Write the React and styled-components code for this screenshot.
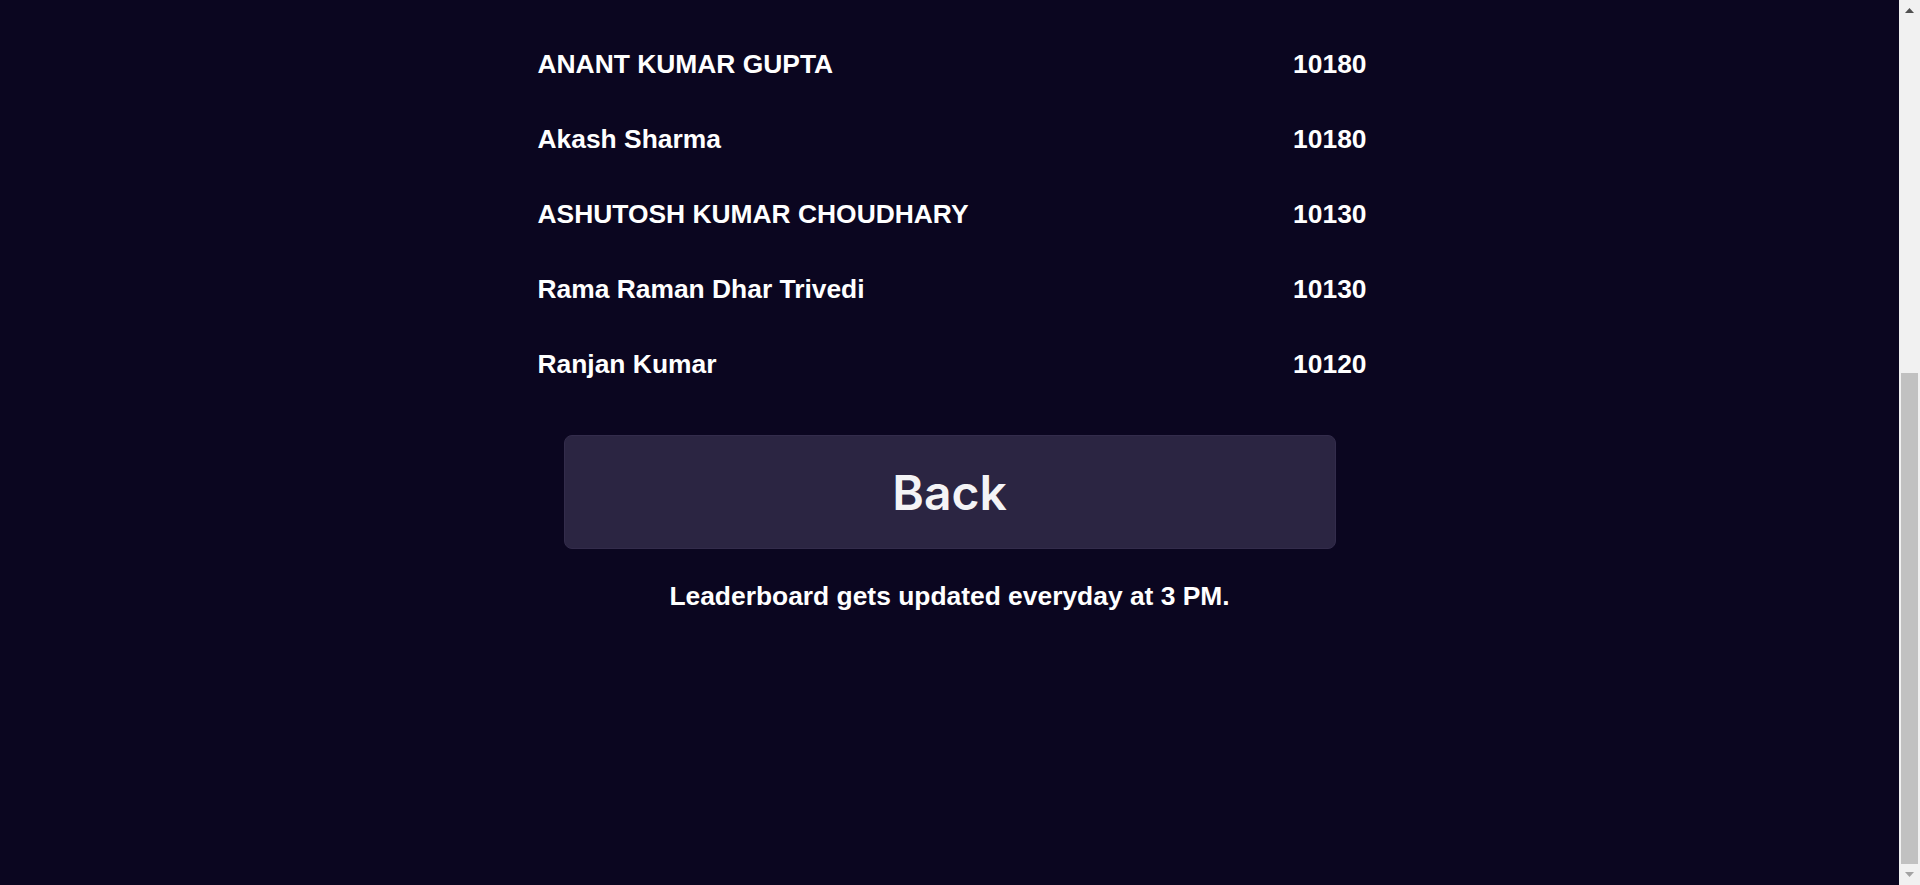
import { useLayoutEffect } from 'react'
import styled, { createGlobalStyle } from 'styled-components'

const players = [
    { name: 'ANANT KUMAR GUPTA', score: 10180 },
    { name: 'Akash Sharma', score: 10180 },
    { name: 'ASHUTOSH KUMAR CHOUDHARY', score: 10130 },
    { name: 'Rama Raman Dhar Trivedi', score: 10130 },
    { name: 'Ranjan Kumar', score: 10120 },
]

export default function App() {
    // the page is shown scrolled to its end
    useLayoutEffect(() => {
        window.scrollTo(0, document.documentElement.scrollHeight)
    }, [])

    return (
        <>
            <GlobalStyle />
            <Page>
                <Header>
                    <h1>Leaderboard</h1>
                </Header>
                <List>
                    {players.map((p, i) => (
                        <Row key={i}>
                            <Name>{p.name}</Name>
                            <Score>{p.score}</Score>
                        </Row>
                    ))}
                </List>
                <BackButton>Back</BackButton>
                <Note>Leaderboard gets updated everyday at 3 PM.</Note>
            </Page>
            <Scrollbar>
                <ArrowBtn>
                    <svg width="9" height="5" viewBox="0 0 9 5">
                        <polygon points="4.5,0 9,5 0,5" fill="#505050" />
                    </svg>
                </ArrowBtn>
                <Track>
                    <Thumb />
                </Track>
                <ArrowBtn>
                    <svg width="9" height="5" viewBox="0 0 9 5">
                        <polygon points="0,0 9,0 4.5,5" fill="#a3a3a3" />
                    </svg>
                </ArrowBtn>
            </Scrollbar>
        </>
    )
}

const GlobalStyle = createGlobalStyle`
    html, body {
        margin: 0;
        padding: 0;
        background: #0b0620;
    }
    body {
        font-family: "Liberation Sans", Arial, sans-serif;
        color: #ffffff;
    }
`

const Page = styled.div`
    width: calc(100% - 21px);
    display: flex;
    flex-direction: column;
    align-items: center;
    padding-bottom: 273px;
`

const Header = styled.div`
    height: 676px;
    display: flex;
    align-items: center;
    justify-content: center;
    h1 {
        margin: 0;
        font-size: 40px;
        font-weight: 700;
    }
`

const List = styled.div`
    width: 829px;
    margin-left: 5px;
    display: flex;
    flex-direction: column;
`

const Row = styled.div`
    height: 75px;
    display: flex;
    align-items: center;
    justify-content: space-between;
    font-size: 26.4px;
    font-weight: 700;
`

const Name = styled.span``

const Score = styled.span``

const BackButton = styled.button`
    margin-top: 33px;
    width: 772px;
    height: 114px;
    background: #2b2542;
    border: 1px solid #332c4b;
    border-radius: 8px;
    color: #f4f4f6;
    font-family: Inter, "Noto Sans", sans-serif;
    font-size: 48px;
    font-weight: 600;
    cursor: pointer;
`

const Note = styled.p`
    margin: 32px 0 0;
    font-size: 26.4px;
    font-weight: 700;
`

const Scrollbar = styled.div`
    position: fixed;
    top: 0;
    right: 0;
    bottom: 0;
    width: 21px;
    background: #f1f1f1;
    display: flex;
    flex-direction: column;
`

const ArrowBtn = styled.div`
    height: 21px;
    flex-shrink: 0;
    display: flex;
    align-items: center;
    justify-content: center;
`

const Track = styled.div`
    flex: 1;
    display: flex;
    flex-direction: column;
    justify-content: flex-end;
    padding: 0 2px;
`

const Thumb = styled.div`
    height: 491px;
    background: #c1c1c1;
`
